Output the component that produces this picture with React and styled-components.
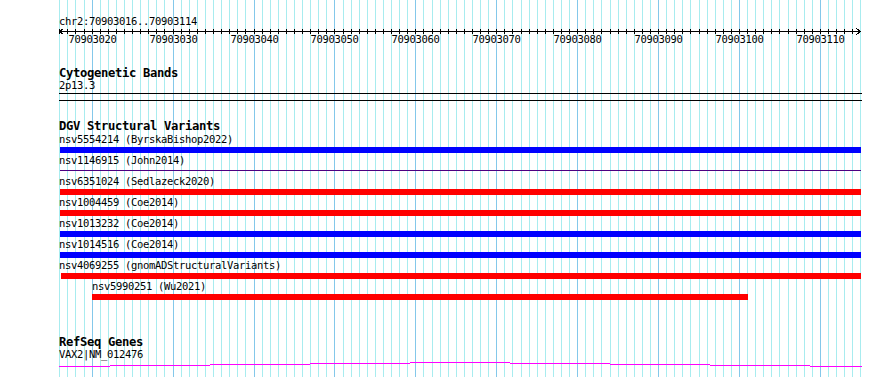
import React from "react";
import styled, { createGlobalStyle } from "styled-components";

const START = 70903016;
const END = 70903114;
const BP = 8.092; // pixels per base
const ORIGIN = 59; // left edge of the data panel
const PANEL_W = 803;
const PAGE_W = 890;
const PAGE_H = 377;

const tickX = (i) => Math.round(0.3 + BP * i);
const bpX = (b) => Math.min(PANEL_W, Math.max(0, Math.round((b - START) * BP + 0.7)));

const GlobalStyle = createGlobalStyle`
  html, body { margin: 0; padding: 0; background: #ffffff; }
  #root { width: ${PAGE_W}px; height: ${PAGE_H}px; }
`;

const Page = styled.div`
  position: relative;
  width: ${PAGE_W}px;
  height: ${PAGE_H}px;
  overflow: hidden;
  background: #ffffff;
  color: #000000;
  font-family: "DejaVu Sans Mono", "Liberation Mono", monospace;
`;

const Guides = styled.svg`
  position: absolute;
  left: 0;
  top: 0;
  z-index: 0;
  display: block;
`;

const Panel = styled.div`
  position: relative;
  z-index: 1;
  display: flex;
  flex-direction: column;
  width: ${PANEL_W}px;
  padding: 15px 0 0 ${ORIGIN}px;
`;

const Label = styled.div`
  font-size: 10.5px;
  letter-spacing: -0.32px;
  line-height: 13px;
  height: 13px;
  white-space: pre;
  padding-left: ${(p) => p.$indent || 0}px;
`;

const TrackTitle = styled.div`
  margin-top: ${(p) => p.$gap}px;
  font-size: 12.2px;
  letter-spacing: -0.34px;
  font-weight: bold;
  line-height: 12px;
  height: 12px;
  white-space: pre;
`;

const Ruler = styled.svg`
  display: block;
  overflow: visible;
`;

const RulerText = styled.text`
  font-family: "DejaVu Sans Mono", "Liberation Mono", monospace;
  font-size: 10.5px;
  letter-spacing: -0.32px;
  fill: #000000;
`;

const Ideogram = styled.div`
  margin-top: 1px;
  height: 6px;
  border-top: 1px solid #000000;
  border-bottom: 1px solid #000000;
`;

const FeatureList = styled.div`
  display: flex;
  flex-direction: column;
  margin-top: 1px;
`;

const Feature = styled.div`
  display: flex;
  flex-direction: column;
  height: 21px;
`;

const Lane = styled.div`
  display: flex;
  align-items: flex-start;
  height: 8px;
`;

const Bar = styled.div`
  flex: none;
  margin-top: ${(p) => (p.$thin ? 3 : 1)}px;
  height: ${(p) => (p.$thin ? 1 : 6)}px;
  background: ${(p) => p.$color};
`;

const GeneLane = styled.svg`
  display: block;
`;

const COLORS = { loss: "#ff0000", gain: "#0000ff", complex: "#4b0082" };

const variants = [
  { id: "nsv5554214", src: "ByrskaBishop2022", type: "gain", start: START, end: END + 1 },
  { id: "nsv1146915", src: "John2014", type: "complex", start: START, end: END + 1, thin: true },
  { id: "nsv6351024", src: "Sedlazeck2020", type: "loss", start: START, end: END + 1 },
  { id: "nsv1004459", src: "Coe2014", type: "loss", start: START, end: END + 1 },
  { id: "nsv1013232", src: "Coe2014", type: "gain", start: START, end: END + 1 },
  { id: "nsv1014516", src: "Coe2014", type: "gain", start: START, end: END + 1 },
  { id: "nsv4069255", src: "gnomADStructuralVariants", type: "loss", start: START + 0.1, end: END + 1 },
  { id: "nsv5990251", src: "Wu2021", type: "loss", start: 70903020, end: 70903101 },
];

const geneSegments = [
  [59, 110, 5],
  [110, 210, 4],
  [210, 310, 3],
  [310, 410, 2],
  [410, 510, 1],
  [510, 610, 2],
  [610, 710, 3],
  [710, 810, 4],
  [810, 862, 5],
];

const guideIdx = Array.from({ length: 100 }, (_, i) => i);

export default function App() {
  return (
    <>
      <GlobalStyle />
      <Page>
        <Guides width={PAGE_W} height={PAGE_H} shapeRendering="crispEdges">
          {guideIdx.map((i) => {
            const x = ORIGIN + tickX(i) + 0.5;
            const major = (START + i) % 10 === 0;
            return (
              <line
                key={i}
                x1={x}
                x2={x}
                y1={0}
                y2={PAGE_H}
                stroke={major ? "#84c8ea" : "#a8ecef"}
                strokeWidth={1}
              />
            );
          })}
        </Guides>
        <Panel>
          <Label>chr2:70903016..70903114</Label>
          <Ruler width={PANEL_W} height={20} shapeRendering="crispEdges">
            <line x1={0} x2={PANEL_W - 1} y1={3.5} y2={3.5} stroke="#000" strokeWidth={1} />
            <path d="M4.5,0.5 L0.5,3.5 L4.5,6.5" fill="none" stroke="#000" strokeWidth={1} />
            <path d="M797.5,0.5 L801.5,3.5 L797.5,6.5" fill="none" stroke="#000" strokeWidth={1} />
            {guideIdx.slice(0, 99).map((i) => (
              <line
                key={i}
                x1={tickX(i) + 0.5}
                x2={tickX(i) + 0.5}
                y1={1}
                y2={6}
                stroke="#000"
                strokeWidth={1}
              />
            ))}
            {guideIdx
              .filter((i) => (START + i) % 10 === 0)
              .map((i) => (
                <RulerText key={i} x={tickX(i) + 0.5} y={15} textAnchor="middle">
                  {START + i}
                </RulerText>
              ))}
          </Ruler>

          <TrackTitle $gap={19}>Cytogenetic Bands</TrackTitle>
          <Label>2p13.3</Label>
          <Ideogram />

          <TrackTitle $gap={19}>DGV Structural Variants</TrackTitle>
          <FeatureList>
            {variants.map((v) => {
              const left = bpX(v.start);
              const right = bpX(v.end);
              return (
                <Feature key={v.id}>
                  <Label $indent={left > 2 ? left : 0}>{`${v.id} (${v.src})`}</Label>
                  <Lane>
                    <Bar
                      $color={COLORS[v.type]}
                      $thin={v.thin}
                      style={{ marginLeft: left, width: right - left }}
                    />
                  </Lane>
                </Feature>
              );
            })}
          </FeatureList>

          <TrackTitle $gap={35}>RefSeq Genes</TrackTitle>
          <Label>VAX2|NM_012476</Label>
          <GeneLane width={PANEL_W} height={8} shapeRendering="crispEdges">
            {geneSegments.map(([a, b, y]) => (
              <rect key={a} x={a - ORIGIN} y={y} width={b - a} height={1} fill="#ff00ff" />
            ))}
          </GeneLane>
        </Panel>
      </Page>
    </>
  );
}
